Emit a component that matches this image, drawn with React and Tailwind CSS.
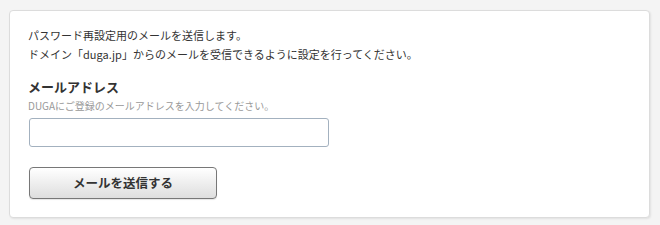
export default function App() {
  return (
    <div className="min-h-screen bg-[#f4f4f4] pt-[10px] px-[9px] font-['Noto_Sans_CJK_JP',sans-serif] text-[#333]">
      <div className="w-[641px] h-[208px] rounded-[4px] border border-[#dcdcdc] bg-white shadow-[1px_1px_2px_rgba(0,0,0,0.08)] pl-[18px] pr-4 pt-[15px]">
        <p className="text-[11px] leading-[19px]">
          パスワード再設定用のメールを送信します。
          <br />
          ドメイン「duga.jp」からのメールを受信できるように設定を行ってください。
        </p>
        <h2 className="mt-[15px] text-[13px] leading-[16px] font-bold">メールアドレス</h2>
        <p className="mt-[4px] text-[10px] leading-[13px] text-[#999]">DUGAにご登録のメールアドレスを入力してください。</p>
        <input
          type="text"
          className="mt-[6px] ml-px block w-[300px] h-[29px] rounded-[3px] border border-[#a3b1bf] bg-white px-2 text-[12px] outline-none"
        />
        <button className="mt-[20px] ml-px flex h-[32px] w-[188px] items-center justify-center rounded-[4px] border border-[#777] bg-gradient-to-b from-white to-[#dedede] text-[12.5px] font-bold text-[#333] shadow-[0_1px_1px_rgba(0,0,0,0.1)]">
          メールを送信する
        </button>
      </div>
    </div>
  );
}
